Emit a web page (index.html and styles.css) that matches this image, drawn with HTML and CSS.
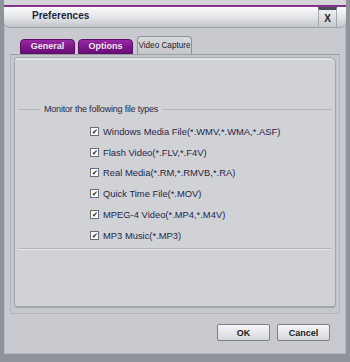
FILE: index.html
```html
<!DOCTYPE html>
<html lang="en">
<head>
    <meta charset="UTF-8">
    <title>Preferences</title>
    <link rel="stylesheet" href="styles.css">
</head>
<body>
    <div class="window">
        <div class="titlebar">
            <span class="title">Preferences</span>
            <span class="close">X</span>
        </div>

        <div class="tabs">
            <span class="tab">General</span>
            <span class="tab">Options</span>
            <span class="tab active">Video Capture</span>
        </div>

        <div class="panel">
            <div class="panel-inner">
                <fieldset class="group">
                    <legend>Monitor the following file types</legend>
                    <div class="checks">
                        <label class="check"><span class="box">&#10004;</span>Windows Media File(*.WMV,*.WMA,*.ASF)</label>
                        <label class="check"><span class="box">&#10004;</span>Flash Video(*.FLV,*.F4V)</label>
                        <label class="check"><span class="box">&#10004;</span>Real Media(*.RM,*.RMVB,*.RA)</label>
                        <label class="check"><span class="box">&#10004;</span>Quick Time File(*.MOV)</label>
                        <label class="check"><span class="box">&#10004;</span>MPEG-4 Video(*.MP4,*.M4V)</label>
                        <label class="check"><span class="box">&#10004;</span>MP3 Music(*.MP3)</label>
                    </div>
                </fieldset>
            </div>
        </div>

        <div class="buttons">
            <button type="button">OK</button>
            <button type="button">Cancel</button>
        </div>
    </div>
</body>
</html>
```

FILE: styles.css
```css
body {
    margin: 0;
    font-family: "Liberation Sans", Arial, sans-serif;
    background-color: #8e949a;
}
.window {
    width: 350px;
    height: 362px;
    box-sizing: border-box;
    border: 4px solid #8e949a;
    border-top: none;
    border-bottom-width: 8px;
    background-color: #c9cacf;
    display: flex;
    flex-direction: column;
    box-shadow: inset 1px 0 0 #b6b9bd, inset -1px 0 0 #b6b9bd, inset 0 -1px 0 #b6b9bd;
}
.titlebar {
    height: 28px;
    box-sizing: border-box;
    border-top: 5px solid #d4d5d9;
    background: linear-gradient(#ffffff, #e4e5e8 55%, #c4c5ca);
    box-shadow: inset 0 1px 0 #7c2a88, inset 0 2px 0 #8b3a96;
    border-bottom: 1px solid #9da0a6;
    border-radius: 0 0 6px 6px;
    display: flex;
    align-items: stretch;
    justify-content: space-between;
    padding: 0 9px 0 28px;
}
.title {
    font-weight: bold;
    font-size: 10px;
    color: #1e1e3c;
    padding-top: 4px;
    line-height: 14px;
}
.close {
    width: 17px;
    margin-top: 2px;
    border: 1px solid #a5a8ad;
    border-bottom: none;
    border-top: 3px solid #4a4a55;
    background: linear-gradient(#eeeff1, #c8c9ce);
    text-align: center;
    font-size: 10px;
    font-weight: bold;
    color: #222;
    line-height: 17px;
}
.tabs {
    display: flex;
    align-items: flex-end;
    gap: 3px;
    padding-left: 16px;
    margin-top: 9px;
    height: 17px;
}
.tab {
    width: 55px;
    height: 15px;
    box-sizing: border-box;
    border-radius: 4px 4px 0 0;
    background: linear-gradient(#9a2aa6, #7a1686 60%, #6a0f78);
    border: 1px solid #5e0c6a;
    color: #f2e6f4;
    font-size: 9px;
    font-weight: bold;
    text-align: center;
    line-height: 13px;
    white-space: nowrap;
}
.tab.active {
    width: 55px;
    height: 18px;
    margin-left: 1px;
    background: linear-gradient(#d8d9dd, #c6c7cc);
    border-color: #8f9297;
    border-bottom: none;
    color: #1e1e2a;
    font-size: 8.2px;
    font-weight: normal;
    line-height: 17px;
}
.panel {
    margin: 0 6px;
    height: 260px;
    box-sizing: border-box;
    border: 1px solid #b3b5ba;
    border-top-color: #9a9da2;
    padding: 2px 3px 5px 3px;
    background-color: #c6c7cc;
}
.panel-inner {
    height: 100%;
    box-sizing: border-box;
    border: 1px solid #a2a5aa;
    border-bottom-width: 2px;
    border-radius: 3px 6px 4px 4px;
    background-color: #d1d2d6;
    box-shadow: inset 0 2px 0 #e2e3e6;
    padding-top: 46px;
}
.group {
    margin: 0 3px;
    padding: 7px 0 2px 0;
    border: none;
    border-top: 1px solid #b4b6bb;
    border-bottom: 1px solid #b4b6bb;
    box-shadow: 0 1px 0 #e4e5e8;
}
.group legend {
    margin-left: 22px;
    padding: 0 4px;
    font-size: 9px;
    letter-spacing: -0.2px;
    color: #2a2a48;
}
.checks {
    padding-left: 72px;
}
.check {
    display: flex;
    align-items: center;
    height: 20.8px;
    font-size: 9.4px;
    color: #262648;
}
.box {
    width: 7px;
    height: 7px;
    border: 1px solid #6c6e74;
    background-color: #fff;
    margin-right: 4px;
    font-size: 7px;
    line-height: 7px;
    text-align: center;
    color: #111;
}
.buttons {
    display: flex;
    justify-content: flex-end;
    gap: 7px;
    padding: 10px 16px 0 0;
}
button {
    width: 53px;
    height: 17px;
    padding: 0;
    border: 1px solid #7c7f86;
    border-radius: 2px;
    background: linear-gradient(#f6f6f8, #d6d7dc);
    font-family: "Liberation Sans", Arial, sans-serif;
    font-size: 9px;
    font-weight: bold;
    color: #222;
}
```
